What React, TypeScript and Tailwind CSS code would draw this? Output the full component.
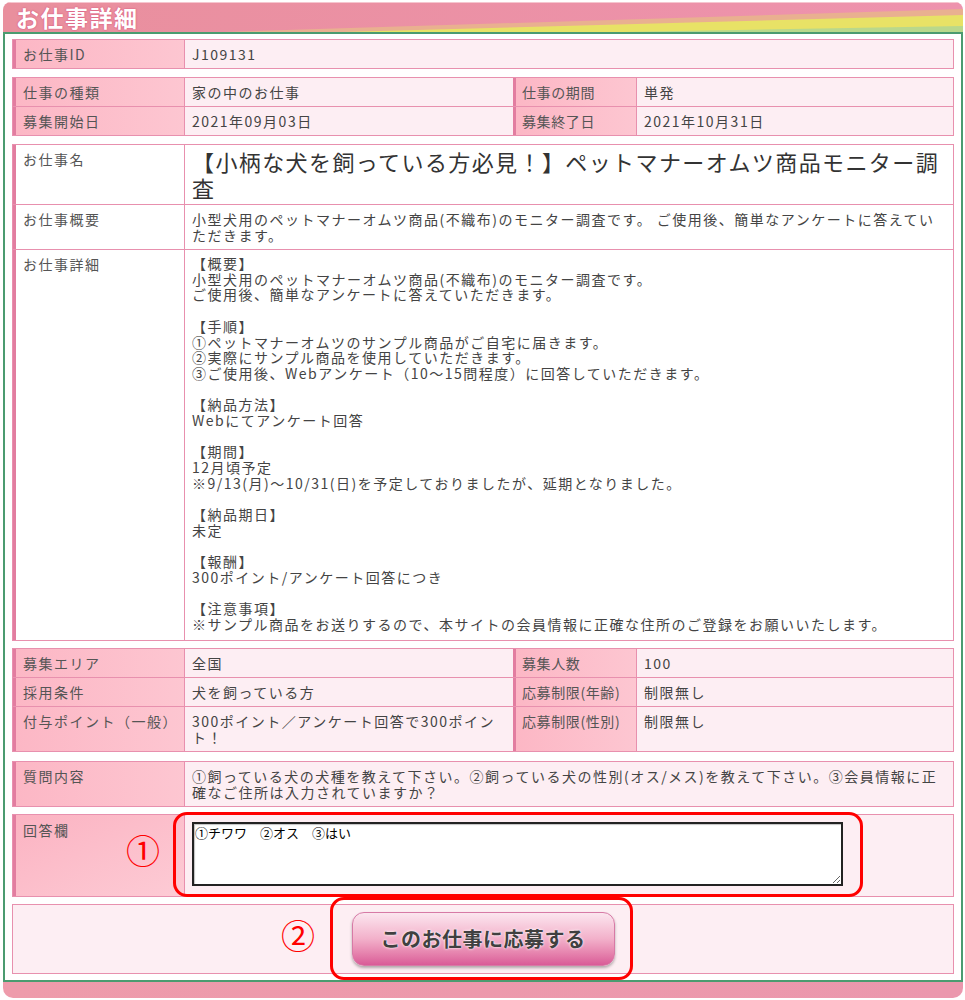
import clsx from "clsx";
import type { ReactNode } from "react";

const detailText = `【概要】
小型犬用のペットマナーオムツ商品(不織布)のモニター調査です。
ご使用後、簡単なアンケートに答えていただきます。

【手順】
①ペットマナーオムツのサンプル商品がご自宅に届きます。
②実際にサンプル商品を使用していただきます。
③ご使用後、Webアンケート（10～15問程度）に回答していただきます。

【納品方法】
Webにてアンケート回答

【期間】
12月頃予定
※9/13(月)～10/31(日)を予定しておりましたが、延期となりました。

【納品期日】
未定

【報酬】
300ポイント/アンケート回答につき

【注意事項】
※サンプル商品をお送りするので、本サイトの会員情報に正確な住所のご登録をお願いいたします。`;

function Label({ children, white }: { children: ReactNode; white?: boolean }) {
  return (
    <div
      className={clsx(
        "w-[172px] shrink-0 border-l-[3px] border-r border-l-[#e27da0] border-r-[#e890ae] px-[7px] pt-[6px] pb-[6px] whitespace-nowrap text-[#555]",
        white ? "bg-white" : "bg-linear-to-r from-[#fcb7c5] to-[#fdc6d1]"
      )}
    >
      {children}
    </div>
  );
}

function Label2({ children }: { children: ReactNode }) {
  return (
    <div className="w-[124px] shrink-0 border-l-[3px] border-r border-l-[#e27da0] border-r-[#e890ae] bg-linear-to-r from-[#fcb7c5] to-[#fdc6d1] px-[6px] pt-[6px] pb-[6px] whitespace-nowrap tracking-[0.6px] text-[#555]">
      {children}
    </div>
  );
}

function Value({ children, white, half }: { children: ReactNode; white?: boolean; half?: boolean }) {
  return (
    <div
      className={clsx(
        "px-[7px] pt-[6px] pb-[6px] text-[#444]",
        half ? "w-[328px] shrink-0" : "flex-1",
        white ? "bg-white" : "bg-[#fdeef3]"
      )}
    >
      {children}
    </div>
  );
}

function Row({ children, first }: { children: ReactNode; first?: boolean }) {
  return <div className={clsx("flex", !first && "border-t border-[#e890ae]")}>{children}</div>;
}

export default function App() {
  return (
    <div className="min-h-screen bg-white pt-[2px] font-['Noto_Sans_CJK_JP','Noto_Sans',sans-serif] text-[14px] leading-[16px] tracking-[1.5px]">
      <div className="relative ml-[3px] w-[960px]">
        {/* header */}
        <div className="relative h-[30px] rounded-t-[8px] bg-linear-to-r from-[#e98f9d] to-[#ee93ae]">
          <div className="absolute inset-0 overflow-hidden rounded-t-[8px]">
            <svg width="960" height="30" viewBox="0 0 960 30">
              <polygon points="220,30 960,7 960,30" fill="#e9b090" />
              <polygon points="340,30 960,13 960,30" fill="#e8e266" />
              <polygon points="620,30 960,24 960,30" fill="#b9d88c" />
              <rect x="0" y="0" width="960" height="1" fill="#f6c6cf" />
            </svg>
          </div>
          <h1 className="relative pl-[13px] text-[23px] leading-[30px] font-bold tracking-[1.5px] text-white [text-shadow:0_0_2px_#d9577e,0_0_1px_#d9577e]">
            お仕事詳細
          </h1>
        </div>

        {/* main box */}
        <div className="relative border-2 border-[#4b9b70] bg-white px-[7px] pt-[5px] pb-[6px]">
          <div className="border border-[#e890ae]">
            <Row first>
              <Label>お仕事ID</Label>
              <Value>J109131</Value>
            </Row>
          </div>

          <div className="mt-[8px] border border-[#e890ae]">
            <Row first>
              <Label>仕事の種類</Label>
              <Value half>家の中のお仕事</Value>
              <Label2>仕事の期間</Label2>
              <Value>単発</Value>
            </Row>
            <Row>
              <Label>募集開始日</Label>
              <Value half>2021年09月03日</Value>
              <Label2>募集終了日</Label2>
              <Value>2021年10月31日</Value>
            </Row>
          </div>

          <div className="mt-[8px] border border-[#e890ae]">
            <Row first>
              <Label white>お仕事名</Label>
              <div className="flex-1 bg-white px-[7px] pt-[3px] pb-[4px] text-[22px] leading-[26px] tracking-[1.4px] whitespace-nowrap text-[#333]">
                【小柄な犬を飼っている方必見！】ペットマナーオムツ商品モニター調
                <br />査
              </div>
            </Row>
            <Row>
              <Label white>お仕事概要</Label>
              <Value white>
                <span className="whitespace-nowrap">
                  小型犬用のペットマナーオムツ商品(不織布)のモニター調査です。 ご使用後、簡単なアンケートに答えてい
                </span>
                <br />
                ただきます。
              </Value>
            </Row>
            <Row>
              <Label white>お仕事詳細</Label>
              <div className="flex-1 bg-white px-[7px] pt-[6px] pb-[7px] leading-[15.7px] whitespace-pre-line text-[#444]">
                {detailText}
              </div>
            </Row>
          </div>

          <div className="mt-[7px] border border-[#e890ae]">
            <Row first>
              <Label>募集エリア</Label>
              <Value half>全国</Value>
              <Label2>募集人数</Label2>
              <Value>100</Value>
            </Row>
            <Row>
              <Label>採用条件</Label>
              <Value half>犬を飼っている方</Value>
              <Label2>応募制限(年齢)</Label2>
              <Value>制限無し</Value>
            </Row>
            <Row>
              <Label>付与ポイント（一般）</Label>
              <Value half>
                <span className="whitespace-nowrap">300ポイント／アンケート回答で300ポイン</span>
                <br />ト！
              </Value>
              <Label2>応募制限(性別)</Label2>
              <Value>制限無し</Value>
            </Row>
          </div>

          <div className="mt-[9px] border border-[#e890ae]">
            <Row first>
              <Label>質問内容</Label>
              <Value>
                <span className="whitespace-nowrap">
                  ①飼っている犬の犬種を教えて下さい。②飼っている犬の性別(オス/メス)を教えて下さい。③会員情報に正
                </span>
                <br />
                確なご住所は入力されていますか？
              </Value>
            </Row>
          </div>

          <div className="mt-[7px] border border-[#e890ae]">
            <div className="flex">
              <div className="w-[172px] shrink-0 border-l-[3px] border-r border-l-[#e27da0] border-r-[#e890ae] bg-linear-to-br from-[#fbb3c2] to-[#fdcbd5] px-[7px] pt-[7px] text-[#555]">
                回答欄
              </div>
              <div className="flex-1 bg-[#fdeef3] px-[7px] pt-[7px] pb-[10px]">
                <textarea
                  defaultValue="①チワワ　②オス　③はい"
                  className="block h-[64px] w-[651px] border-2 border-[#222] bg-white px-[1px] py-[1px] text-[13px] leading-[15px] tracking-normal text-black shadow-[inset_1px_1px_1px_rgba(0,0,0,0.25)] outline-none"
                />
              </div>
            </div>
          </div>

          <div className="mt-[7px] border border-[#e890ae] bg-[#fdeef3]">
            <div className="flex justify-center py-[7px]">
              <button className="h-[54px] w-[263px] rounded-[12px] border border-[#d77aa6] bg-linear-to-b from-[#fbe6ef] via-[#f2b0ca] to-[#d95b97] text-[20px] font-bold tracking-[0.5px] text-[#404040] shadow-[0_2px_3px_rgba(0,0,0,0.3)] [text-shadow:0_0_3px_#ffffff,0_0_1px_#ffffff]">
                このお仕事に応募する
              </button>
            </div>
          </div>

          {/* annotations */}
          <div className="absolute top-[778px] left-[168px] h-[85px] w-[690px] rounded-[14px] border-[3px] border-[#ff0000]" />
          <div className="absolute top-[863px] left-[325px] h-[83px] w-[303px] rounded-[14px] border-[3px] border-[#ff0000]" />
          <div className="absolute top-[796px] left-[121px] text-[34px] leading-[40px] tracking-normal text-[#ff0000]">①</div>
          <div className="absolute top-[881px] left-[276px] text-[34px] leading-[40px] tracking-normal text-[#ff0000]">②</div>
        </div>

        <div className="h-[16px] rounded-b-[10px] bg-linear-to-r from-[#ee9bab] to-[#eb97ad]" />
      </div>
    </div>
  );
}
